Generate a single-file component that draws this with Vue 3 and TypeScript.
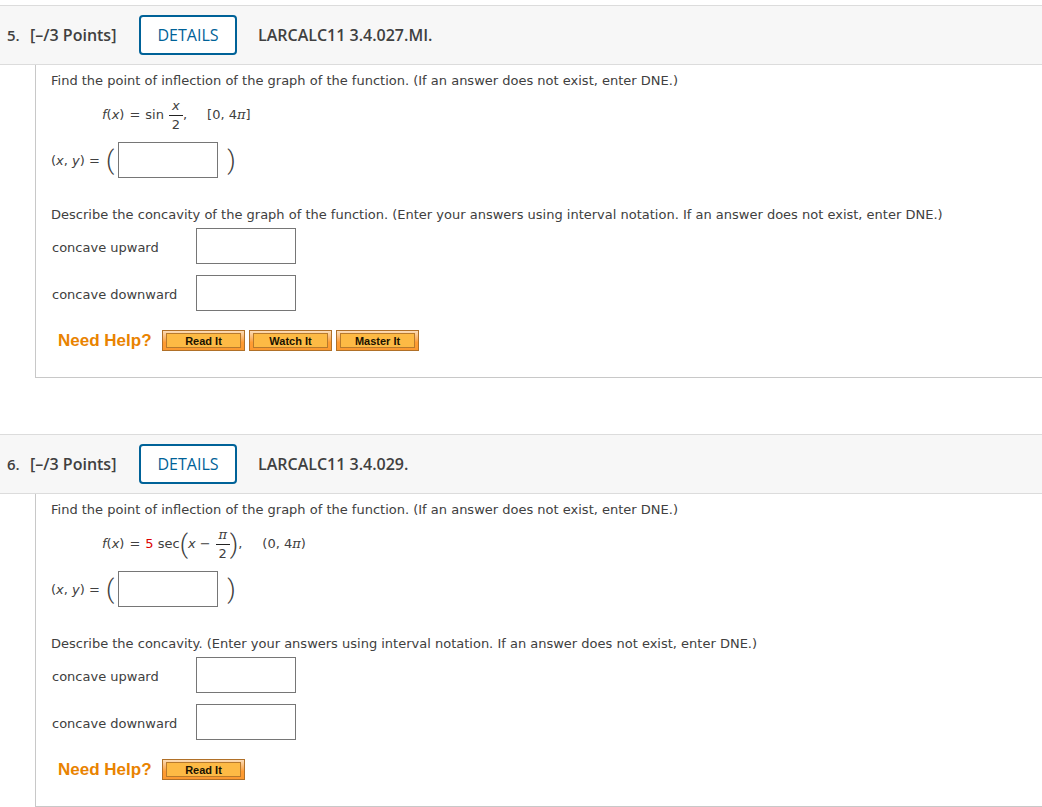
<script setup lang="ts">
interface Question {
  number: number
  code: string
  formula: 'sine' | 'secant'
  concavityPrompt: string
  help: string[]
}

const questions: Question[] = [
  {
    number: 5,
    code: 'LARCALC11 3.4.027.MI.',
    formula: 'sine',
    concavityPrompt:
      'Describe the concavity of the graph of the function. (Enter your answers using interval notation. If an answer does not exist, enter DNE.)',
    help: ['Read It', 'Watch It', 'Master It'],
  },
  {
    number: 6,
    code: 'LARCALC11 3.4.029.',
    formula: 'secant',
    concavityPrompt:
      'Describe the concavity. (Enter your answers using interval notation. If an answer does not exist, enter DNE.)',
    help: ['Read It'],
  },
]
</script>

<template>
  <main class="assignment">
    <section v-for="q in questions" :key="q.number" class="question">
      <header class="bar">
        <span class="number">{{ q.number }}.</span>
        <span class="points">[–/3 Points]</span>
        <button type="button" class="details">DETAILS</button>
        <h2 class="code">{{ q.code }}</h2>
      </header>
      <div class="body">
        <p class="prompt">
          Find the point of inflection of the graph of the function. (If an answer does not exist, enter DNE.)
        </p>

        <div v-if="q.formula === 'sine'" class="formula">
          <span><i>f</i>(<i>x</i>)</span>
          <span class="equals">=</span>
          <span>sin</span>
          <span class="fraction"><i class="top">x</i><span>2</span></span>
          <span>,</span>
          <span class="domain">[0, 4<i class="pi">π</i>]</span>
        </div>
        <div v-else class="formula">
          <span><i>f</i>(<i>x</i>)</span>
          <span class="equals">=</span>
          <span><span class="value">5</span> sec</span>
          <span class="paren">(</span>
          <span><i>x</i> −</span>
          <span class="fraction"><i class="top pi">π</i><span>2</span></span>
          <span class="paren">)</span>
          <span>,</span>
          <span class="domain">(0, 4<i class="pi">π</i>)</span>
        </div>

        <div class="point">
          <label :for="`point-${q.number}`">(<i>x</i>, <i>y</i>) =</label>
          <span class="paren">(</span>
          <input :id="`point-${q.number}`" class="answer" type="text" />
          <span class="paren closing">)</span>
        </div>

        <p class="prompt">{{ q.concavityPrompt }}</p>
        <div class="answers">
          <label :for="`up-${q.number}`">concave upward</label>
          <input :id="`up-${q.number}`" class="answer" type="text" />
          <label :for="`down-${q.number}`">concave downward</label>
          <input :id="`down-${q.number}`" class="answer" type="text" />
        </div>

        <div class="help">
          <span class="help-title">Need Help?</span>
          <button v-for="item in q.help" :key="item" type="button" class="help-button">
            <span class="face">{{ item }}</span>
          </button>
        </div>
      </div>
    </section>
  </main>
</template>

<style>
body {
  margin: 0;
  background: #fff;
}
</style>

<style scoped>
.assignment {
  display: flex;
  flex-direction: column;
  gap: 56px;
  padding-top: 5px;
  color: #404040;
  font: 13px/20px Verdana, 'DejaVu Sans', sans-serif;
}

.bar {
  display: flex;
  align-items: center;
  box-sizing: border-box;
  height: 60px;
  padding-left: 7px;
  border-top: 1px solid #dcdcdc;
  border-bottom: 1px solid #dcdcdc;
  background: #f7f7f7;
  font: 600 16px/24px 'Open Sans', sans-serif;
}

.number {
  width: 23px;
  font-size: 15px;
}

.points {
  width: 109px;
}

.details {
  box-sizing: border-box;
  width: 98px;
  height: 40px;
  padding: 0;
  border: 2px solid #006298;
  border-radius: 4px;
  background: #fff;
  color: #006298;
  font: 500 16px/24px 'Open Sans', sans-serif;
}

.code {
  margin: 0 0 0 21px;
  font: inherit;
}

.body {
  margin-left: 35px;
  padding: 6px 15px 26px;
  border-left: 1px solid #c8c8c8;
  border-bottom: 1px solid #c8c8c8;
}

.prompt {
  margin: 0;
}

.formula {
  display: flex;
  align-items: center;
  height: 44px;
  margin: 2px 0 5px 51px;
  line-height: 18px;
}

.equals {
  margin: 0 5px;
}

.fraction {
  display: flex;
  flex-direction: column;
  align-items: center;
  width: 14px;
  margin-left: 5px;
}

.top {
  align-self: stretch;
  border-bottom: 1px solid #222;
  text-align: center;
}

.pi {
  font-family: 'DejaVu Serif', serif;
}

.value {
  color: #d00;
}

.domain {
  margin-left: 20px;
}

.paren {
  font: 300 26px/36px Roboto, sans-serif;
}

.point {
  display: flex;
  align-items: center;
  margin-bottom: 27px;
}

.point label {
  width: 55px;
  padding-top: 2px;
}

.point .answer {
  margin-left: 4px;
}

.closing {
  margin-left: 9px;
}

.answer {
  box-sizing: border-box;
  width: 100px;
  height: 36px;
  padding: 4px 8px;
  border: 1px solid #767676;
  border-radius: 0;
  background: #fff;
  color: inherit;
  font: inherit;
}

.answers {
  display: grid;
  grid-template-columns: 144px 100px;
  row-gap: 11px;
  align-items: center;
  margin: 3px 0 19px 1px;
}

.answers label {
  padding-top: 4px;
}

.help {
  display: flex;
  align-items: center;
  gap: 4px;
  height: 21px;
  padding-left: 7px;
}

.help-title {
  width: 100px;
  color: #e98300;
  font: bold 17px/21px 'Liberation Sans', Arial, sans-serif;
}

.help-button {
  box-sizing: border-box;
  width: 83px;
  height: 21px;
  padding: 2px 3px;
  border: 1px solid #b07028;
  background: linear-gradient(#fbdcb8, #fbb366 40%, #ff9c33 60%, #fb9930);
}

.face {
  display: block;
  padding-top: 2px;
  border: 1px solid #b87a2c;
  background: #fdba45;
  color: #1a1200;
  font: bold 11px/11px 'Liberation Sans', Arial, sans-serif;
}
</style>
